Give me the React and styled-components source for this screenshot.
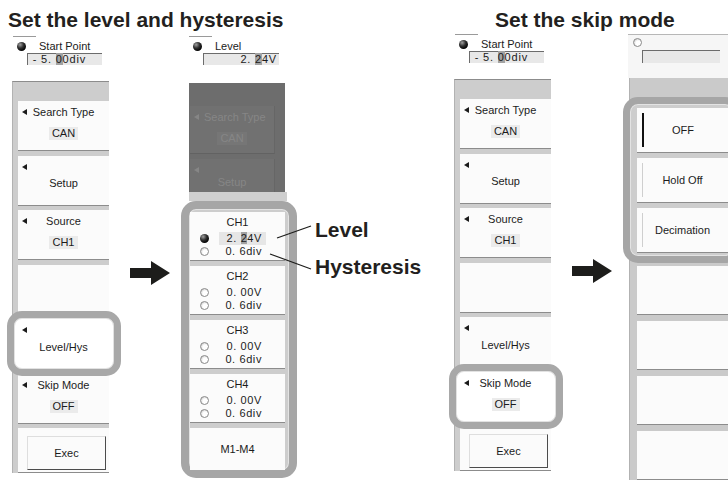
import styled, { createGlobalStyle, css } from "styled-components"

const GlobalStyle = createGlobalStyle`
  html, body {
    margin: 0;
    padding: 0;
    background: #fff;
  }
  body {
    font-family: "Liberation Sans", Arial, sans-serif;
    color: #1b1b1b;
  }
`

const Page = styled.div`
  display: flex;
  width: 728px;
  height: 480px;
  overflow: hidden;
  background: #fff;
`

const Section = styled.section`
  position: relative;
  flex: none;
  width: ${p => p.$width}px;
  display: flex;
  flex-direction: column;
`

const Title = styled.h2`
  margin: 0;
  height: 36px;
  box-sizing: border-box;
  padding: 8px 0 0 ${p => p.$indent}px;
  font: bold 21px/24px "Liberation Sans", Arial, sans-serif;
  color: #231f20;
  white-space: nowrap;
`

const Stage = styled.div`
  display: flex;
  align-items: flex-start;
`

const Column = styled.div`
  flex: ${p => (p.$width ? "none" : "1")};
  width: ${p => (p.$width ? p.$width + "px" : "auto")};
  margin-left: ${p => p.$offset || 0}px;
  display: flex;
  flex-direction: column;
  font-size: 11px;
`

const ArrowColumn = styled.div`
  flex: none;
  width: 72px;
  padding: 225px 0 0 21px;
  box-sizing: border-box;
`

/* header above each soft-key menu */
const Header = styled.div`
  height: 45px;
  padding-left: ${p => p.$inset || 0}px;
  display: flex;
  flex-direction: column;
`

const HeaderRule = styled.div`
  width: 23px;
  height: 1px;
  margin-left: 1px;
  background: #9a9a9a;
`

const KnobRow = styled.div`
  margin-top: 3px;
  height: 12px;
  display: flex;
  align-items: center;
  gap: 13px;
  padding-left: 5px;
  line-height: 12px;
`

const Knob = styled.span`
  flex: none;
  width: 9px;
  height: 9px;
  border-radius: 50%;
  box-sizing: border-box;
  ${p =>
    p.$on
      ? css`
          background: radial-gradient(circle at 35% 30%, #a0a0a0 0, #303030 40%, #000 75%);
        `
      : css`
          border: 1px solid #8a8a8a;
          background: radial-gradient(circle at 62% 62%, #fff 0, #fff 40%, #d4d4d4 75%);
        `}
`

const Field = styled.div`
  margin: ${p => p.$top || 1}px 0 0 ${p => p.$left}px;
  width: ${p => p.$w}px;
  height: ${p => p.$h || 12}px;
  box-sizing: border-box;
  border-top: 1px solid #6c6c6c;
  border-left: 1px solid #6c6c6c;
  background: #e8e8e8;
  padding-right: ${p => p.$pad || 0}px;
  text-align: right;
  font-size: 11px;
  line-height: 11px;
  letter-spacing: 0.8px;
  white-space: pre;
`

const Cursor = styled.span`
  background: #a2a2a2;
`

/* soft-key menu */
const Menu = styled.div`
  border-top: 1px solid #8c8c8c;
  border-left: 1px solid #b2b2b2;
  background: #cdcdcd;
  padding: 19px 0 0 5px;
  display: flex;
  flex-direction: column;
  gap: 4.5px;
`

const tones = {
  plain: { bg: "#fbfbfb", line: "#8c8c8c", ink: "#1b1b1b", pill: "#ebebeb" },
  ghost: { bg: "#717171", line: "#626262", ink: "#868686", pill: "#767676" },
}

const Key = styled.div`
  position: relative;
  flex: none;
  height: ${p => p.$h || 49}px;
  background: ${p => tones[p.$tone || "plain"].bg};
  border-bottom: 1px solid ${p => tones[p.$tone || "plain"].line};
  ${p => p.$tone === "ghost" && css`border-right: 1px solid #666;`}
  color: ${p => tones[p.$tone || "plain"].ink};
  display: flex;
  flex-direction: column;
  ${p =>
    p.$ring &&
    css`
      z-index: 1;
      &::before {
        content: "";
        position: absolute;
        inset: -8px -12px -8px -11px;
        border: 7px solid #a8a8a8;
        border-radius: 15px;
        background: #fff;
        box-shadow: inset 0 0 0 1px #e2e2e2;
        z-index: -1;
      }
    `}
`

const KeyTop = styled.div`
  height: 22px;
  display: grid;
  grid-template-columns: 14px 1fr 14px;
  align-items: center;
`

const Arrow = styled.span`
  justify-self: start;
  margin-left: 4px;
  width: 0;
  height: 0;
  border-top: 3.5px solid transparent;
  border-bottom: 3.5px solid transparent;
  border-right: 5px solid currentColor;
`

const KeyLabel = styled.span`
  text-align: center;
  white-space: nowrap;
  line-height: 14px;
`

const KeyText = styled.div`
  margin-top: ${p => -(p.$raise || 0)}px;
  text-align: center;
  line-height: 14px;
  white-space: nowrap;
`

const Value = styled.span`
  align-self: center;
  margin-top: 4px;
  padding: 0 3px;
  line-height: 13px;
  background: ${p => tones[p.$tone || "plain"].pill};
`

const ExecButton = styled.div`
  flex: 1;
  margin: 8px 3px 2px 9px;
  border-top: 1px solid #dedede;
  border-left: 1px solid #dedede;
  border-right: 1px solid #4c4c4c;
  border-bottom: 1px solid #4c4c4c;
  display: flex;
  align-items: center;
  justify-content: center;
`

/* middle column: dimmed menu + channel keys */
const Dimmed = styled.div`
  margin: 2px 0 0 8px;
  width: 96px;
  height: 109px;
  box-sizing: border-box;
  background: #6d6d6d;
  padding: 23px 10px 0 1px;
  overflow: hidden;
  display: flex;
  flex-direction: column;
  gap: 5px;
`

const Strip = styled.div`
  margin-left: 8px;
  width: 98px;
  height: 9px;
  background: #cfcfcf;
`

const Frame = styled.div`
  box-sizing: border-box;
  border: ${p => p.$thick}px solid #a6a6a6;
  border-radius: 15px;
  background: #cdcdcd;
  box-shadow: inset 0 0 0 1px #e3e3e3;
  display: flex;
  flex-direction: column;
  gap: 5px;
`

const ChannelFrame = styled(Frame)`
  width: 116px;
  height: 277px;
  padding: 3px 4px 0 1px;
`

const ChLabel = styled.div`
  padding-top: 3px;
  margin-bottom: 3px;
  line-height: 14px;
  text-align: center;
`

const ChRow = styled.div`
  height: 13px;
  display: flex;
  align-items: center;
  padding: 0 19px 0 10px;
`

const ChValue = styled.span`
  margin-left: auto;
  padding: 0 4px 0 ${p => (p.$active ? 8 : 4)}px;
  background: ${p => (p.$active ? "#e6e6e6" : "transparent")};
  line-height: 13px;
  letter-spacing: 0.6px;
  white-space: pre;
`

const BottomKey = styled(Key)`
  justify-content: center;
  align-items: center;
  border-bottom: none;
`

/* callouts */
const Callouts = styled.div`
  flex: 1;
  padding: 182px 0 0 18px;
  display: flex;
  flex-direction: column;
  gap: 13px;
`

const Callout = styled.div`
  font: bold 21px/24px "Liberation Sans", Arial, sans-serif;
  color: #231f20;
  white-space: nowrap;
`

const Leaders = styled.svg`
  position: absolute;
  left: 0;
  top: 0;
  pointer-events: none;
`

/* right-most column: skip mode choices */
const PlainHeader = styled.div`
  margin-left: 5px;
  height: 44px;
  box-sizing: border-box;
  background: #f6f6f6;
  border-top: 1px solid #b7b7b7;
  padding: 3px 0 0 5px;
  display: flex;
  flex-direction: column;
`

const ChoiceMenu = styled.div`
  margin-left: 6px;
  border-left: 1px solid #b2b2b2;
  background: #cacaca;
  padding: 19px 0 0 7px;
  display: flex;
  flex-direction: column;
`

const ChoiceFrame = styled(Frame)`
  margin: 0 -12px 0 -14px;
  padding: 4px 5px 3px 7px;
`

const ChoiceKey = styled(Key)`
  flex-direction: row;
  align-items: center;
`

const Indicator = styled.span`
  flex: none;
  margin-left: 5px;
  width: ${p => (p.$on ? 2 : 1)}px;
  height: 34px;
  background: ${p => (p.$on ? "#111" : "#cfcfcf")};
`

const ChoiceLabel = styled.span`
  flex: 1;
  text-align: center;
  padding-right: 6px;
`

const KeyStack = styled.div`
  margin-top: 3px;
  display: flex;
  flex-direction: column;
  gap: 6px;
`

const BigArrow = () => (
  <svg width="40" height="24" viewBox="0 0 40 24">
    <path d="M0 7 H21 V0 L40 12 L21 24 V17 H0 Z" fill="#1d1d1b" />
  </svg>
)

const MenuPanel = ({ ring }) => (
  <>
    <Header>
      <HeaderRule />
      <KnobRow>
        <Knob $on />
        <span>Start Point</span>
      </KnobRow>
      <Field $left={15} $w={75} $pad={16}>
        - 5. <Cursor>0</Cursor>0div
      </Field>
    </Header>
    <Menu>
      <Key>
        <KeyTop>
          <Arrow />
          <KeyLabel>Search Type</KeyLabel>
        </KeyTop>
        <Value>CAN</Value>
      </Key>
      <Key>
        <KeyTop>
          <Arrow />
        </KeyTop>
        <KeyText $raise={2}>Setup</KeyText>
      </Key>
      <Key>
        <KeyTop>
          <Arrow />
          <KeyLabel>Source</KeyLabel>
        </KeyTop>
        <Value>CH1</Value>
      </Key>
      <Key />
      <Key $ring={ring === "level"}>
        <KeyTop>
          <Arrow />
        </KeyTop>
        <KeyText $raise={1}>Level/Hys</KeyText>
      </Key>
      <Key $ring={ring === "skip"}>
        <KeyTop>
          <Arrow />
          <KeyLabel>Skip Mode</KeyLabel>
        </KeyTop>
        <Value>OFF</Value>
      </Key>
      <Key $h={44}>
        <ExecButton>Exec</ExecButton>
      </Key>
    </Menu>
  </>
)

const channels = [
  { name: "CH1", level: "2. 24V", active: true },
  { name: "CH2", level: "0. 00V" },
  { name: "CH3", level: "0. 00V" },
  { name: "CH4", level: "0. 00V" },
]

export default function App() {
  return (
    <Page>
      <GlobalStyle />
      <Section $width={440}>
        <Title $indent={8}>Set the level and hysteresis</Title>
        <Stage>
          <Column $width={97} $offset={12}>
            <MenuPanel ring="level" />
          </Column>
          <ArrowColumn>
            <BigArrow />
          </ArrowColumn>
          <Column $width={116}>
            <Header $inset={7}>
              <HeaderRule />
              <KnobRow>
                <Knob $on />
                <span>Level</span>
              </KnobRow>
              <Field $left={15} $w={76} $pad={2}>
                2. <Cursor>2</Cursor>4V
              </Field>
            </Header>
            <Dimmed>
              <Key $tone="ghost" $h={47}>
                <KeyTop>
                  <Arrow />
                  <KeyLabel>Search Type</KeyLabel>
                </KeyTop>
                <Value $tone="ghost">CAN</Value>
              </Key>
              <Key $tone="ghost" $h={47}>
                <KeyTop>
                  <Arrow />
                </KeyTop>
                <KeyText $raise={6}>Setup</KeyText>
              </Key>
            </Dimmed>
            <Strip />
            <ChannelFrame $thick={8}>
              {channels.map(ch => (
                <Key key={ch.name} $h={48}>
                  <ChLabel>{ch.name}</ChLabel>
                  <ChRow>
                    <Knob $on={ch.active} />
                    <ChValue $active={ch.active}>
                      {ch.active ? (
                        <>
                          2. <Cursor>2</Cursor>4V
                        </>
                      ) : (
                        ch.level
                      )}
                    </ChValue>
                  </ChRow>
                  <ChRow>
                    <Knob />
                    <ChValue>0. 6div</ChValue>
                  </ChRow>
                </Key>
              ))}
              <BottomKey $h={42}>M1-M4</BottomKey>
            </ChannelFrame>
          </Column>
          <Callouts>
            <Callout>Level</Callout>
            <Callout>Hysteresis</Callout>
          </Callouts>
        </Stage>
        <Leaders width="440" height="480">
          <line x1="277" y1="238" x2="311" y2="226" stroke="#1d1d1b" strokeWidth="1.2" />
          <line x1="270" y1="254" x2="311" y2="269" stroke="#1d1d1b" strokeWidth="1.2" />
        </Leaders>
      </Section>

      <Section $width={288}>
        <Title $indent={55}>Set the skip mode</Title>
        <Stage>
          <Column $width={97} $offset={14}>
            <MenuPanel ring="skip" />
          </Column>
          <ArrowColumn>
            <BigArrow />
          </ArrowColumn>
          <Column>
            <PlainHeader>
              <Knob />
              <Field $top={3} $left={9} $w={78} $h={13} />
            </PlainHeader>
            <ChoiceMenu>
              <ChoiceFrame $thick={7}>
                <ChoiceKey $h={44}>
                  <Indicator $on />
                  <ChoiceLabel>OFF</ChoiceLabel>
                </ChoiceKey>
                <ChoiceKey $h={44}>
                  <Indicator />
                  <ChoiceLabel>Hold Off</ChoiceLabel>
                </ChoiceKey>
                <ChoiceKey $h={44}>
                  <Indicator />
                  <ChoiceLabel>Decimation</ChoiceLabel>
                </ChoiceKey>
              </ChoiceFrame>
              <KeyStack>
                <Key $h={48} />
                <Key $h={48} />
                <Key $h={48} />
                <Key $h={48} />
              </KeyStack>
            </ChoiceMenu>
          </Column>
        </Stage>
      </Section>
    </Page>
  )
}
